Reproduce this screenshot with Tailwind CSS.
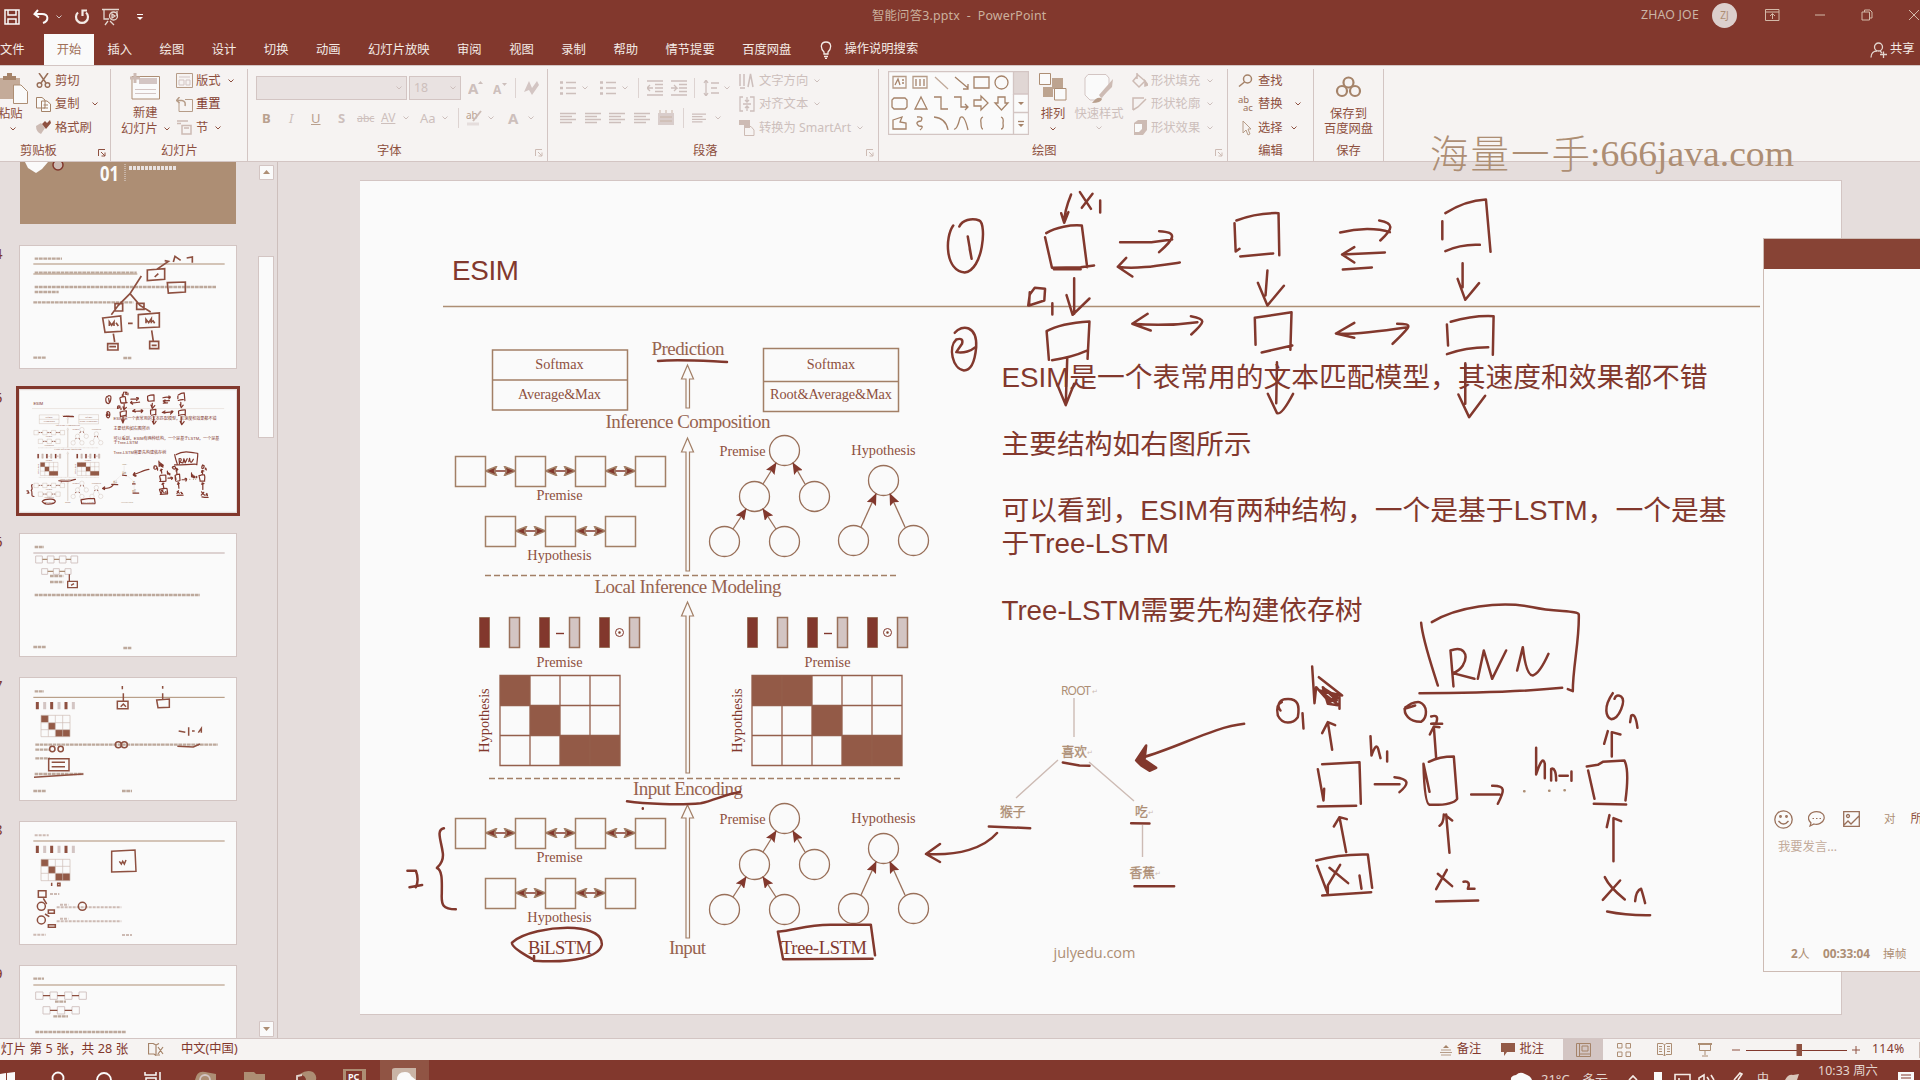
<!DOCTYPE html>
<html lang="zh-CN">
<head>
<meta charset="utf-8">
<title>智能问答3.pptx - PowerPoint</title>
<script src="https://cdn.jsdelivr.net/npm/@tailwindcss/browser@4"></script>
</head>
<body class="w-[1920px] h-[1080px] overflow-hidden bg-[#e5dddc] text-[#82382d] font-['Noto_Sans','Noto_Sans_CJK_SC',sans-serif] text-[12.3px] leading-none">

<svg width="0" height="0" class="absolute">
  <defs>
    <symbol id="chev" viewBox="0 0 6 4"><path d="M.5 .5L3 3L5.5 .5" fill="none" stroke="currentColor"/></symbol>
    <symbol id="launch" viewBox="0 0 8 8"><path d="M.5 7V.5H7M3 3L7 7M7 3.500V7H3.500" fill="none" stroke="currentColor"/></symbol>
    <symbol id="lines" viewBox="0 0 16 12"><path d="M0 1.500H16M0 4.500H12M0 7.500H16M0 10.500H12" stroke="currentColor" stroke-width="1.300"/></symbol>
    <symbol id="list" viewBox="0 0 16 16"><path d="M0 2.500H3M0 8H3M0 13.500H3" stroke="currentColor" stroke-width="2.500"/><path d="M6 2.500H16M6 8H16M6 13.500H16" stroke="currentColor" stroke-width="1.300"/></symbol>
    <symbol id="pair" viewBox="0 0 30 10"><path d="M8 5H22" stroke="#82382d"/><path d="M0 5L11 .5L9 5L11 9.500ZM30 5L19 .5L21 5L19 9.500Z" fill="#82382d"/></symbol>
    <marker id="tip" viewBox="0 0 12 10" refX="11" refY="5" markerWidth="12" markerHeight="10" markerUnits="userSpaceOnUse" orient="auto"><path d="M0 0L12 5L0 10L2 5Z" fill="#82382d"/></marker>

    <g id="lstm" fill="none" stroke="#a27f66" stroke-width="1.500">
      <path d="M456.500 456.500h30v30h-30zM516.500 456.500h30v30h-30zM576.500 456.500h30v30h-30zM636.500 456.500h30v30h-30zM486.500 516.500h30v30h-30zM546.500 516.500h30v30h-30zM606.500 516.500h30v30h-30z"/>
      <use href="#pair" x="486.500" y="466" width="30" height="10"/><use href="#pair" x="546.500" y="466" width="30" height="10"/><use href="#pair" x="606.500" y="466" width="30" height="10"/>
      <use href="#pair" x="516.500" y="526" width="30" height="10"/><use href="#pair" x="576.500" y="526" width="30" height="10"/>
      <g fill="#8e5040" stroke="none" font-size="14.300" text-anchor="middle"><text x="560.500" y="500">Premise</text><text x="560.500" y="560">Hypothesis</text></g>
    </g>
    <g id="tree" fill="none" stroke="#99705a" stroke-width="1.300">
      <circle cx="785.500" cy="450.500" r="15"/><circle cx="755.500" cy="496.500" r="15"/><circle cx="815.500" cy="496.500" r="15"/><circle cx="725.500" cy="541.500" r="15"/><circle cx="785.500" cy="541.500" r="15"/>
      <circle cx="884.500" cy="480.500" r="15"/><circle cx="854.500" cy="540.500" r="15"/><circle cx="914.500" cy="540.500" r="15"/>
      <g marker-end="url(#tip)"><path d="M764 484L777 463"/><path d="M806 484L794 463"/><path d="M734 529L747 509"/><path d="M777 529L764 509"/><path d="M862 527L877 494"/><path d="M906 527L891 494"/></g>
      <g fill="#8e5040" stroke="none" font-size="14.300" text-anchor="middle"><text x="743.500" y="456">Premise</text><text x="884.500" y="454.500">Hypothesis</text></g>
    </g>
    <g id="bars" stroke="#99705a">
      <path fill="#82382d" d="M480.500 617.500h10v30h-10zM540.500 617.500h10v30h-10zM600.500 617.500h10v30h-10z"/>
      <path fill="#d3c5c3" stroke-width="1.500" d="M510.500 617.500h10v30h-10zM570.500 617.500h10v30h-10zM630.500 617.500h10v30h-10z"/>
      <path d="M557 633.500h8" stroke="#82382d" stroke-width="1.400"/><circle cx="620.500" cy="632.500" r="4" fill="none" stroke="#82382d"/><circle cx="620.500" cy="632.500" r="1" fill="#82382d"/>
      <text x="560.500" y="666.500" font-size="14.300" text-anchor="middle" fill="#8e5040" stroke="none">Premise</text>
    </g>

    <!-- Current slide, shared by the editor canvas and its thumbnail -->
    <symbol id="slide" viewBox="361 181 1481 833">
      <rect x="361" y="181" width="1481" height="833" fill="#fafafa"/>
      <path d="M444 306.500H1761" stroke="#ad8e74" stroke-width="1.300"/>
      <g font-family="Liberation Sans, Noto Sans CJK SC, sans-serif" fill="#82382d" font-size="27.800">
        <text x="453" y="280" textLength="67">ESIM</text>
        <text x="1002.500" y="387" textLength="706">ESIM是一个表常用的文本匹配模型，其速度和效果都不错</text>
        <text x="1002.500" y="454" textLength="250">主要结构如右图所示</text>
        <text x="1002.500" y="520" textLength="725">可以看到，ESIM有两种结构，一个是基于LSTM，一个是基</text>
        <text x="1002.500" y="553">于Tree-LSTM</text>
        <text x="1002.500" y="620" textLength="361">Tree-LSTM需要先构建依存树</text>
      </g>
      <g font-family="Liberation Serif, serif">
        <g fill="none" stroke="#a27f66" stroke-width="1.500">
          <path d="M493.500 350h135v60h-135zM493.500 380h135M764.500 348.500h135v63h-135zM764.500 381.500h135"/>
          <path d="M486 575.500H900M490 778.500H904" stroke-dasharray="6 3"/>
          <path fill="#fafafa" stroke-width="1.200" d="M687 408V379L682.500 379L688.500 365L694.500 379L690.500 379V408ZM687 571V452L682.500 452L688.500 438L694.500 452L690.500 452V571ZM687 773V616L682.500 616L688.500 602L694.500 616L690.500 616V773ZM687 938V818L682.500 818L688.500 805L694.500 818L690.500 818V938Z"/>
        </g>
        <g fill="#8e5040" font-size="14.300" text-anchor="middle">
          <text x="560.500" y="368.500">Softmax</text><text x="560.500" y="398.500" textLength="83">Average&amp;Max</text>
          <text x="832" y="368.500">Softmax</text><text x="832" y="398.500" textLength="122">Root&amp;Average&amp;Max</text>
        </g>
        <g fill="#97634f" font-size="19" text-anchor="middle">
          <text x="689" y="355" textLength="73">Prediction</text><text x="689" y="428" textLength="165">Inference Composition</text>
          <text x="689" y="592.500" textLength="187">Local Inference Modeling</text><text x="689" y="794.500" textLength="110">Input Encoding</text><text x="688.500" y="953.500" textLength="37">Input</text>
          <g fill="#82382d" font-size="18.500"><text x="561" y="953.500" textLength="64">BiLSTM</text><text x="825" y="953.500" textLength="86">Tree-LSTM</text></g>
        </g>
        <use href="#lstm"/><use href="#lstm" y="362"/><use href="#tree"/><use href="#tree" y="368"/><use href="#bars"/><use href="#bars" x="268"/>
        <path fill="#935a47" d="M501 675.500h30v30h-30zM531 705.500h30v30h-30zM561 735.500h60v30h-60zM753 675.500h60v30h-60zM813 705.500h30v30h-30zM843 735.500h60v30h-60z"/>
        <path fill="none" stroke="#945f4c" stroke-width="1.300" d="M501 675.500h120v90h-120zM501 705.500h120M501 735.500h120M531 675.500v90M561 675.500v90M591 675.500v90M753 675.500h150v90h-150zM753 705.500h150M753 735.500h150M783 675.500v90M813 675.500v90M843 675.500v90M873 675.500v90"/>
        <g fill="#82382d" font-size="14.300" text-anchor="middle"><text transform="translate(489.500 720.500) rotate(-90)">Hypothesis</text><text transform="translate(742.500 720.500) rotate(-90)">Hypothesis</text></g>
      </g>
      <g font-family="Noto Sans, Noto Sans CJK SC, sans-serif" fill="#ad8e74" font-size="12.800">
        <path d="M1075 698V737M1059 760L1017 798M1090 762L1135 801M1143.500 825V857" stroke="#cdbbb4" stroke-width="1.400"/>
        <text x="1062" y="695" font-size="12" textLength="30">ROOT</text><text x="1062.500" y="755.500" stroke="#ad8e74" stroke-width=".3">喜欢</text><text x="1001" y="816" stroke="#ad8e74" stroke-width=".3">猴子</text><text x="1136" y="816" stroke="#ad8e74" stroke-width=".3">吃</text><text x="1130.500" y="877" stroke="#ad8e74" stroke-width=".3">香蕉</text>
        <g font-size="7" fill="#cdbbb4"><text x="1093" y="694">↵</text><text x="1088" y="755">↵</text><text x="1149" y="815">↵</text><text x="1156" y="876">↵</text></g>
        <text x="1054.500" y="957.500" font-family="Open Sans, sans-serif" font-size="14.500" textLength="82">julyedu.com</text>
      </g>
      <!-- pen annotations -->
      <g class="[stroke-width:var(--ink)] [&_path]:[vector-effect:non-scaling-stroke]" fill="none" stroke="#82382d" stroke-linecap="round" stroke-linejoin="round">
        <g transform="translate(930.500 170.500) scale(.3827 .3333)">
          <path d="M62 165C40 200 40 300 92 306C140 300 150 160 130 150C110 140 85 150 78 168M100 198L110 265L105 235"/>
          <path d="M370 72C360 100 352 130 352 157M344 128L352 157L363 125M393 65L422 115M426 70L398 112M446 90V126"/>
          <path d="M305 188C330 170 370 162 398 165L412 290M302 200L320 292L395 290L430 285M325 296H395"/>
          <path d="M498 215H580L634 207M600 182C650 185 640 205 600 245M654 276C600 285 540 297 492 289M514 262L492 289L530 318"/>
          <path d="M378 323V430M358 374L374 433L418 384M262 365L260 405L300 390L302 355L275 352L262 372L258 405M321 398V432"/>
          <path d="M802 150C840 133 880 127 912 128L914 254M797 158L800 243L810 235M812 258L898 249M883 300L878 375M858 337L883 405L926 346"/>
          <path d="M1073 186C1120 172 1170 172 1203 185M1175 150C1215 158 1212 175 1178 210M1190 246L1078 252M1110 230L1078 252L1110 276M1080 297L1156 291"/>
          <path d="M1348 128Q1400 90 1454 87L1466 244M1340 152V206M1348 242Q1390 220 1438 223M1393 278V350M1380 325L1400 388L1436 338"/>
          <path d="M66 487C85 460 125 465 122 530C118 580 105 600 90 600C60 595 48 530 70 507Q90 500 85 520L70 545C90 550 110 540 120 530"/>
          <path d="M306 482C340 460 390 455 418 453L413 565M306 482L312 568M320 569Q370 562 413 540M360 560L356 704M333 640L356 704L378 640"/>
          <path d="M530 460Q620 468 700 455M570 430L530 460L578 480M683 437C725 445 720 455 684 492M850 442L946 425L943 538M850 442L852 523M868 546L948 525"/>
          <path d="M908 575L906 698M884 670L908 728Q920 735 950 670M1062 489Q1100 495 1250 470M1110 457L1062 489L1110 502M1222 460C1265 460 1260 465 1210 520"/>
          <path d="M1362 454Q1420 434 1474 437L1472 553M1352 462L1355 525M1352 551Q1400 530 1460 530M1400 578V700M1382 672L1410 740L1452 676"/>
        </g>
        <path d="M659 361C680 359 705 361 728 362M927 854C960 856 985 848 998 833M941 844L927 854L941 862"/>
        <g transform="translate(400 600) scale(.3508 .3333)">
          <path d="M650 604C700 612 800 616 860 610C900 600 940 580 972 576M695 625V626M128 685C105 690 120 720 125 760C128 790 110 800 108 804C125 810 122 850 122 880C120 915 125 928 162 928M24 812L48 812Q58 840 48 862M30 862L66 855"/>
          <path d="M385 1080C350 1060 320 1040 322 1028C350 1000 430 980 500 984C560 990 580 1010 578 1035C570 1070 500 1090 385 1082V1068M1080 995C1130 990 1160 975 1230 974L1345 974L1357 1066M1080 995L1095 1078L1350 1076"/>
        </g>
        <g transform="translate(980.500 580.500) scale(.3333)">
          <path d="M250 546L300 555L330 556M28 738L152 743M455 728L510 729M465 917H584M794 430C700 440 600 500 485 532"/>
          <path fill="#82382d" d="M500 495L470 540L485 555L510 571L530 562L495 538Z"/>
        </g>
        <g transform="translate(1250.500 590.500) scale(.3333)">
          <path d="M547 95C620 50 750 30 850 50C920 65 985 60 988 72C990 150 970 230 970 302L955 296M515 97C520 150 545 220 565 285M510 308C650 308 800 305 938 292"/>
          <path d="M603 180L612 288M603 180C640 165 660 190 640 225C630 240 620 245 610 248L675 265M685 265L703 180L728 265L770 180M803 240L820 170Q830 255 850 255Q870 250 897 190"/>
          <path d="M188 228L195 338L200 290L240 335L270 320M208 260L278 315L210 300L270 345L235 340L220 290L262 330M225 295L268 322L238 328M270 320V355"/>
          <path d="M93 360C80 345 90 330 105 326C150 320 150 350 145 380C130 400 100 405 85 375C80 350 88 338 97 335M159 368L162 414M248 478L235 395M218 428L235 395L257 404"/>
          <path d="M218 521L330 515L334 640M205 536L222 630L224 595M205 648L320 646M290 785L270 680M253 708L270 680L292 686"/>
          <path d="M200 810Q270 790 355 792L368 892M203 826L235 910M218 915L365 905M240 832L296 878M272 823L235 885V905M330 855L336 895"/>
          <path d="M363 437L366 495Q380 455 386 475L393 503M413 483V513M376 581H450M435 560C480 565 480 580 450 605"/>
          <path d="M468 350C460 370 480 395 515 394C535 380 535 345 510 335C490 333 475 345 465 355L497 345M545 378Q570 370 560 398L545 400H578M560 502L553 408M541 432L553 408L570 410"/>
          <path d="M538 514Q570 498 613 498L623 625Q610 645 540 643Q525 640 522 520L540 604M600 787L590 672M570 706Q582 700 583 672M590 676L608 690"/>
          <path d="M565 850L608 887M592 838L560 896M642 874Q665 870 655 895H675M560 933L686 930M665 612H750M728 586C770 585 765 600 745 640"/>
          <path d="M860 472V552Q880 490 886 520V563M905 570V535Q920 530 920 570M930 556H955M966 543V571"/>
          <g stroke="#ad8e74"><path d="M824 602h1M899 601h1M945 599h1"/></g>
          <path d="M1090 308C1060 350 1070 380 1085 386C1110 385 1130 330 1115 318Q1100 310 1095 325M1142 395L1145 376Q1158 365 1164 412M1087 498V425M1064 460L1075 422M1087 425L1113 432"/>
          <path d="M1012 528L1045 523L1060 514L1125 510Q1140 540 1128 630M1016 540L1035 625M1033 640L1130 642M1092 812V683M1072 710L1080 674M1092 683L1115 692"/>
          <path d="M1066 860Q1080 890 1126 927M1112 870L1060 928M1157 932Q1160 900 1175 895Q1180 910 1187 938M1073 963Q1130 975 1202 974"/>
        </g>
      </g>
    </symbol>
  </defs>
</svg>

<div class="flex h-[1080px] flex-col">
  <!-- title bar -->
  <header class="flex h-[34px] shrink-0 items-center bg-[#82382d] pl-1 text-[#d3c5c3]">
    <div class="flex w-[869px] items-center">
      <svg class="h-4 w-4" viewBox="0 0 16 16" fill="none" stroke="#fafafa" stroke-width="1.500"><path d="M1 1H15V15H1ZM4 1V6H12V1M4 15V10H12V15"/></svg>
      <svg class="ml-[13px] h-4 w-4" viewBox="0 0 16 16" fill="none" stroke="#fafafa" stroke-width="2"><path d="M5 1L1.500 5L6 8.500M2 5H9C16 5 16 12 10 14"/></svg>
      <svg class="ml-[7px] h-1 w-[6px]"><use href="#chev" width="6" height="4"/></svg>
      <svg class="ml-3 h-4 w-4" viewBox="0 0 16 16" fill="none" stroke="#f4ebe6" stroke-width="2.200"><path d="M4 3.500A6 6 0 1 0 12 3.500M8.500 7V1.500H13"/></svg>
      <svg class="ml-[12px] h-[18px] w-[18px]" viewBox="0 0 18 18" fill="none" stroke="#e3d6cf" stroke-width="1.300"><path d="M0 1.500H17M2 2V11H7M6 13L3 17M8 13L12 17M15 3V8"/><circle cx="11.500" cy="8" r="4"/><path d="M10 6L13 8L10 10Z"/></svg>
      <svg class="ml-[16px] h-2 w-2" viewBox="0 0 8 8"><path d="M1 1.500H7" stroke="#fafafa"/><path d="M1 4H7L4 7Z" fill="#fafafa"/></svg>
    </div>
    <div class="w-[769px] whitespace-pre pb-px text-[12.400px] tracking-[.18px] text-[#cbb09d]">智能问答3.pptx  -  PowerPoint</div>
    <div class="flex items-center pb-1">
      <span class="w-[72px] whitespace-nowrap pl-px text-[12.300px] tracking-[.2px] text-[#cbb5a6]">ZHAO JOE</span>
      <span class="flex h-[25px] w-[25px] items-center justify-center rounded-full bg-[#dccfcc] text-[10px] text-[#ad8e74]">ZJ</span>
      <svg class="ml-7 h-3 w-[15px]" viewBox="0 0 15 12" fill="none" stroke="#d3b9a8"><path d="M.5 .5H14V11.500H.5ZM.5 3H14M7.500 10V5M5 7L7.500 4.500L10 7"/></svg>
      <svg class="ml-[34px] h-3 w-3" viewBox="0 0 12 12"><path d="M1 6H11" stroke="#d3b9a8"/></svg>
      <svg class="ml-[35px] h-3 w-3" viewBox="0 0 12 12" fill="none" stroke="#d3b9a8"><path d="M1 3H8.500V11H1ZM3.500 3V1H9L11 3V9H8.500"/></svg>
      <svg class="ml-[35px] h-3 w-3 shrink-0" viewBox="0 0 12 12" fill="none" stroke="#d3b9a8"><path d="M1 1L11 11M11 1L1 11"/></svg>
    </div>
  </header>
  <!-- ribbon tabs -->
  <nav class="flex h-[31px] shrink-0 items-stretch bg-[#82382d] text-[#f4ebe6]">
    <span class="flex w-[44px] items-center pt-px">文件</span>
    <span class="flex w-[50px] items-center justify-center bg-[#fafafa] pt-px text-[#9f7058]">开始</span>
    <div class="flex items-center gap-[27.500px] pl-[13.500px] pt-px">
      <span>插入</span><span>绘图</span><span>设计</span><span>切换</span><span>动画</span><span>幻灯片放映</span><span>审阅</span><span>视图</span><span>录制</span><span>帮助</span><span>情节提要</span><span>百度网盘</span>
    </div>
    <div class="flex items-center pl-[29px]">
      <svg class="h-[18px] w-3" viewBox="0 0 12 18" fill="none" stroke="#f4ebe6" stroke-width="1.300"><path d="M4 13V11C0 7 .5 1 6 1S12 7 8 11V13ZM4 15.500H8M5 17.500H7"/></svg>
      <span class="ml-3">操作说明搜索</span>
    </div>
    <div class="ml-auto flex w-[50px] items-center">
      <svg class="h-4 w-[18px]" viewBox="0 0 18 16" fill="none" stroke="#e3d6cf" stroke-width="1.300"><circle cx="8.500" cy="5" r="4"/><path d="M1 15.500C1 11 4 9 7 9M10 9L12 11M10 12.500H17M13.500 9.500V16"/></svg>
      <span class="ml-[2px] whitespace-nowrap">共享</span>
    </div>
  </nav>

  <!-- ribbon -->
  <section class="flex h-24 shrink-0 border-t border-[#d3c5c3] bg-[#f6f3f2] pt-[3px] text-[#8e5040]">
    <div class="flex w-[111px] flex-col border-r border-[#d3c5c3]">
      <div class="flex h-[72px]">
        <div class="flex w-9 flex-col pt-1">
          <svg class="h-[31px] w-7" viewBox="0 0 28 31"><path d="M0 5H20V26H0Z" fill="#c4ab99"/><path d="M3 7V3H7V0H12V3H16V7Z" fill="#a58369"/><path d="M13.500 12H21L27.500 18.500V30.500H13.500Z" fill="#fafafa" stroke="#ad8e74"/></svg>
          <span class="-ml-[2px] mt-[4px]">粘贴</span><svg class="ml-[10px] mt-[7px] h-1 w-[6px]"><use href="#chev" width="6" height="4"/></svg>
        </div>
        <div class="flex flex-col">
          <div class="flex h-[23.500px] items-center gap-1"><svg class="h-[15px] w-[15px]" viewBox="0 0 15 15" fill="none" stroke="#99705a" stroke-width="1.500"><path d="M3 0L10 10M12 0L5 10"/><circle cx="3.500" cy="12" r="2.300"/><circle cx="11.500" cy="12" r="2.300"/></svg>剪切</div>
          <div class="flex h-[23.500px] items-center gap-1"><svg class="h-[15px] w-[15px]" viewBox="0 0 15 15" fill="#fafafa" stroke="#a58369"><path d="M.5 .5H6L9 3V11H.5ZM5.500 4H11L14.500 7V14.500H5.500ZM7.500 8H12M7.500 11H12"/></svg>复制<svg class="ml-2 h-1 w-[6px]"><use href="#chev" width="6" height="4"/></svg></div>
          <div class="flex h-[23.500px] items-center gap-1"><svg class="h-[15px] w-[15px]" viewBox="0 0 15 15"><path d="M0 6L5 3L9 8L5 14Q0 12 0 6Z" fill="#cdbbb4"/><path d="M6 4L9 1L11 3L14 0L15 3L10 9Z" fill="#8e5040"/></svg>格式刷</div>
        </div>
      </div>
      <div class="flex h-5 items-center pl-5">剪贴板<svg class="ml-auto mr-1 mt-1 h-2 w-2"><use href="#launch" width="8" height="8"/></svg></div>
    </div>
    <div class="flex w-[137px] flex-col border-r border-[#d3c5c3]">
      <div class="flex h-[72px]">
        <div class="flex w-[65px] flex-col pl-[11px] pt-1">
          <svg class="ml-2 h-[27px] w-[31px]" viewBox="0 0 31 27"><path d="M2 3.500H29.500V26H2Z" fill="#fafafa" stroke="#ad8e74"/><path d="M9 5H27V11H9Z" fill="#d3c5c3"/><path d="M5 16.500H26M5 20.500H26" stroke="#d3c5c3"/><path d="M5 0V10M0 5H10" stroke="#cdbbb4" stroke-width="3"/></svg>
          <span class="ml-[11px] mt-[7px]">新建</span><span class="-ml-px mt-[4px] flex items-center gap-[6px] whitespace-nowrap">幻灯片<svg class="h-1 w-[6px]"><use href="#chev" width="6" height="4"/></svg></span>
        </div>
        <div class="flex flex-col">
          <div class="flex h-[23.500px] items-center gap-[3px]"><svg class="h-[15px] w-[17px]" viewBox="0 0 17 15" fill="none" stroke="#b69c88"><path d="M.5 .5H16.500V14.500H.5Z"/><path d="M3 4H14M3 7H8V12H3ZM10 7H14V12H10Z" stroke="#d3c5c3"/></svg>版式<svg class="ml-1 h-1 w-[6px]"><use href="#chev" width="6" height="4"/></svg></div>
          <div class="flex h-[23.500px] items-center gap-[3px]"><svg class="h-[15px] w-[17px]" viewBox="0 0 17 15" fill="none" stroke="#b69c88"><path d="M3 5V14.500H16.500V2.500H9"/><path d="M1 3.500H6Q10 4 9 9M3.500 0L.5 3.500L3.500 6" stroke-width="1.500"/></svg><span class="text-[#82382d]">重置</span></div>
          <div class="flex h-[23.500px] items-center gap-[3px]"><svg class="h-[15px] w-[17px]" viewBox="0 0 17 15" fill="none" stroke="#cdbbb4" stroke-width="1.500"><path d="M1 1H12M1 3.500H5M6 5.500H15V14H6ZM8 8H13"/></svg>节<svg class="ml-1 h-1 w-[6px]"><use href="#chev" width="6" height="4"/></svg></div>
        </div>
      </div>
      <div class="flex h-5 items-center pl-[50px]">幻灯片</div>
    </div>
    <div class="flex w-[300px] flex-col border-r border-[#d3c5c3] text-[#cdbfbc]">
      <div class="flex h-[72px] flex-col pl-2">
        <div class="mt-[7px] flex h-6 items-center">
          <div class="flex h-6 w-[151px] items-center justify-end border border-[#d3c5c3] bg-[#e9e2e1] pr-1"><svg class="h-1 w-[6px]"><use href="#chev" width="6" height="4"/></svg></div>
          <div class="ml-[2px] flex h-6 w-[52px] items-center justify-between border border-[#d3c5c3] bg-[#e9e2e1] px-1">18<svg class="h-1 w-[6px]"><use href="#chev" width="6" height="4"/></svg></div>
          <svg class="ml-[7px] h-4 w-[15px]" viewBox="0 0 15 16"><text x="0" y="14" font-size="15" font-weight="700" fill="#cdbfbc">A</text><path d="M10 4H15L12.500 1Z" fill="#cdbfbc"/></svg>
          <svg class="ml-[10px] h-4 w-[14px]" viewBox="0 0 14 16"><text x="0" y="14" font-size="12" font-weight="700" fill="#cdbfbc">A</text><path d="M9 3H14L11.500 6Z" fill="#cdbfbc"/></svg>
          <span class="ml-[8px] h-5 w-px bg-[#ddd3d1]"></span>
          <svg class="ml-2 h-4 w-4" viewBox="0 0 16 16"><path d="M0 12L5 1L8 8L13 1L15 5L8 15L5 10Z" fill="#d3c5c3"/></svg>
        </div>
        <div class="mt-[6px] flex h-6 items-center text-[13px]">
          <b class="w-[25px] pl-[6px] text-[#b9a08e]">B</b><i class="w-6 pl-2">I</i><u class="w-[26px] pl-[6px] text-[#b9a08e]">U</u><b class="w-[26px] pl-[7px]">S</b><s class="w-6 text-[10.500px]">abc</s>
          <u class="w-[18px] text-[12px]">AV</u><svg class="ml-[4px] h-1 w-[6px]"><use href="#chev" width="6" height="4"/></svg><span class="ml-[11px] w-[18px]">Aa</span><svg class="ml-[4px] h-1 w-[6px]"><use href="#chev" width="6" height="4"/></svg>
          <span class="ml-[10px] h-5 w-px bg-[#ddd3d1]"></span>
          <svg class="ml-[7px] h-4 w-[17px]" viewBox="0 0 17 16"><text x="0" y="9" font-size="10" fill="#b9a08e">ab</text><path d="M7 11L15 1" stroke="#cdbbb4" stroke-width="2"/><path d="M1 14H13" stroke="#e5dddc" stroke-width="3"/></svg>
          <svg class="ml-[5px] h-1 w-[6px]"><use href="#chev" width="6" height="4"/></svg><b class="ml-[14px] w-[15px] text-[15px]">A</b><svg class="ml-[5px] h-1 w-[6px]"><use href="#chev" width="6" height="4"/></svg>
        </div>
      </div>
      <div class="flex h-5 items-center pl-[129px] text-[#8e5040]">字体<svg class="ml-auto mr-1 mt-1 h-2 w-2 text-[#cdbbb4]"><use href="#launch" width="8" height="8"/></svg></div>
    </div>
    <div class="flex w-[331px] flex-col border-r border-[#d3c5c3] text-[#cdbfbc]">
      <div class="flex h-[72px] pl-3">
        <div class="flex w-[179px] flex-col">
          <div class="mt-[7px] flex h-6 items-center">
            <svg class="h-4 w-4"><use href="#list" width="16" height="16"/></svg><svg class="ml-[6px] h-1 w-[6px]"><use href="#chev" width="6" height="4"/></svg>
            <svg class="ml-3 h-4 w-4"><use href="#list" width="16" height="16"/></svg><svg class="ml-[6px] h-1 w-[6px]"><use href="#chev" width="6" height="4"/></svg>
            <span class="ml-[10px] h-5 w-px bg-[#ddd3d1]"></span>
            <svg class="ml-2 h-4 w-4" viewBox="0 0 16 16" stroke="currentColor" stroke-width="1.300"><path d="M0 1H16M8 4.500H16M8 8H16M8 11.500H16M0 15H16M6 8H0L3 5M0 8L3 11" fill="none"/></svg>
            <svg class="ml-2 h-4 w-4" viewBox="0 0 16 16" stroke="currentColor" stroke-width="1.300"><path d="M0 1H16M8 4.500H16M8 8H16M8 11.500H16M0 15H16M0 8H6L3 5M6 8L3 11" fill="none"/></svg>
            <span class="ml-[7px] h-5 w-px bg-[#ddd3d1]"></span>
            <svg class="ml-2 h-4 w-4" viewBox="0 0 16 16" stroke="currentColor" stroke-width="1.300"><path d="M3 0V16M1 3L3 0L5 3M1 13L3 16L5 13M8 3H16M8 8H14M8 13H16" fill="none"/></svg><svg class="ml-[5px] h-1 w-[6px]"><use href="#chev" width="6" height="4"/></svg>
          </div>
          <div class="mt-[6px] flex h-6 items-center gap-[8.500px]">
            <svg class="h-3 w-4"><use href="#lines" width="16" height="12"/></svg><svg class="h-3 w-4"><use href="#lines" width="16" height="12"/></svg><svg class="h-3 w-4"><use href="#lines" width="16" height="12"/></svg><svg class="h-3 w-4"><use href="#lines" width="16" height="12"/></svg>
            <svg class="h-4 w-4" viewBox="0 0 16 16"><path d="M0 3H16V15H0Z" fill="#d9cdcb"/><path d="M2 0V3M8 0V3M14 0V3M2 7H14M2 11H14" stroke="#c9b4a6"/></svg>
            <span class="h-5 w-px bg-[#ddd3d1]"></span><svg class="h-3 w-[14px]"><use href="#lines" width="14" height="12"/></svg><svg class="h-1 w-[6px]"><use href="#chev" width="6" height="4"/></svg>
          </div>
        </div>
        <div class="flex flex-col whitespace-nowrap">
          <div class="flex h-[23.500px] items-center gap-1"><svg class="h-4 w-4" viewBox="0 0 16 16" stroke="currentColor" stroke-width="1.500" fill="none"><path d="M1 1V13M5 1V13M9 14L11.500 1L14 14M1 15H6"/></svg>文字方向<svg class="ml-0.5 h-1 w-[6px]"><use href="#chev" width="6" height="4"/></svg></div>
          <div class="flex h-[23.500px] items-center gap-1"><svg class="h-4 w-4" viewBox="0 0 16 16" stroke="currentColor" stroke-width="1.300" fill="none"><path d="M4 1H1V15H4M11 1H15V15H11M4 8H12M8 1V6M6 4L8 6L10 4M8 15V10M6 12L8 10L10 12"/></svg>对齐文本<svg class="ml-0.5 h-1 w-[6px]"><use href="#chev" width="6" height="4"/></svg></div>
          <div class="flex h-[23.500px] items-center gap-1"><svg class="h-4 w-4" viewBox="0 0 16 16"><path d="M0 0H11V8H5V5H0Z" fill="#cdbbb4"/><path d="M5.500 6.500H12L15 10V15.500H5.500Z" fill="none" stroke="#cdbbb4"/></svg><span>转换为 SmartArt</span><svg class="ml-0.5 h-1 w-[6px]"><use href="#chev" width="6" height="4"/></svg></div>
        </div>
      </div>
      <div class="flex h-5 items-center pl-[145px] text-[#8e5040]">段落<svg class="ml-auto mr-1 mt-1 h-2 w-2 text-[#cdbbb4]"><use href="#launch" width="8" height="8"/></svg></div>
    </div>
    <div class="flex w-[349px] flex-col border-r border-[#d3c5c3]">
      <div class="flex h-[72px] pl-[9px]">
        <svg class="mt-[2px] h-[64px] w-[141px]" viewBox="888 71 141 64" fill="none" stroke="#a58369" stroke-width="1.300">
          <path d="M888.500 71.500H1028.500V134.500H888.500Z" fill="#fafafa" stroke="#d3c5c3"/><path d="M1013.500 71.500H1028.500V94H1013.500Z" fill="#e0d6d4" stroke="#d3c5c3"/><path d="M1013.500 94V134M1013.500 112.500H1028" stroke="#d3c5c3"/>
          <path d="M893 76.500H906V88H893ZM913 76.500H927V88H913Z" stroke="#b69c88"/><path d="M895 85L898 79L900 85M902 80H904M902 83H904M916 79V86M920 79V86M924 79V86"/>
          <path d="M935 77L948 89" stroke="#c0a999"/><path d="M955 77L968 88M968 84V89H963M974 77H989V88H974Z"/><circle cx="1001.500" cy="82.500" r="6.500"/>
          <path d="M894 98H905L907 100V107L905 109H894L892 107V100ZM921 97L927 109H915ZM934 97H941V109H948M954 97H961V107H968M965 104L968 107L965 110M974 100H981V96L988 103L981 110V106H974ZM998 97H1005V103H1008L1001.500 110L995 103H998Z"/>
          <path d="M893 120L902 117L900 122L906 123V129H893ZM917 117Q924 116 921 121Q914 122 919 126Q925 126 920 130M934 117Q946 118 948 130M954 129Q957 130 960 118Q964 113 968 130M983 117Q980 118 981 123Q981 129 983 129M1001 117Q1004 118 1003 123Q1004 129 1001 129"/>
          <path d="M1018 102H1024L1021 105ZM1018 124H1024L1021 127Z" fill="#a58369" stroke="none"/><path d="M1018 121.500H1024"/>
        </svg>
        <div class="flex w-[44px] flex-col items-center pl-1 pt-1">
          <svg class="h-[28px] w-[28px]" viewBox="0 0 28 28"><path d="M13 5H24V16H13ZM4 14H14V24H4Z" fill="#bda490"/><path d="M.5 .5H11.500V11.500H.5ZM15.500 15.500H27V27H15.500Z" fill="#fafafa" stroke="#ad8e74"/></svg>
          <span class="mt-[7px]">排列</span><svg class="mt-[7px] h-1 w-[6px]"><use href="#chev" width="6" height="4"/></svg>
        </div>
        <div class="flex w-[52px] flex-col items-center pt-1 text-[#cdbfbc]">
          <svg class="h-[30px] w-[30px]" viewBox="0 0 30 30"><path d="M4 1.500H22L25 5V15L16 27H6L1 22V5Z" fill="#fafafa" stroke="#d3c5c3"/><path d="M29 6L28 14L17 25L15 22Z" fill="#cdbbb4"/><path d="M8 30Q14 22 18 26Q17 30 8 30Z" fill="#b9a08e"/></svg>
          <span class="mt-[5px] whitespace-nowrap">快速样式</span><svg class="mt-[6px] h-1 w-[6px]"><use href="#chev" width="6" height="4"/></svg>
        </div>
        <div class="flex flex-col whitespace-nowrap pl-[7px] text-[#cdbfbc]">
          <div class="flex h-[23.500px] items-center gap-[3px]"><svg class="h-4 w-4" viewBox="0 0 16 16" fill="none" stroke="#cdbbb4" stroke-width="1.500"><path d="M6 2L13 8L7 14L1 8ZM5 0V6"/><path d="M13 8L16 12L13 13Z" fill="#cdbbb4"/></svg>形状填充<svg class="ml-1 h-1 w-[6px]"><use href="#chev" width="6" height="4"/></svg></div>
          <div class="flex h-[23.500px] items-center gap-[3px]"><svg class="h-4 w-4" viewBox="0 0 16 16" fill="none" stroke="#cdbbb4" stroke-width="1.500"><path d="M1 14V2H12M14 3L6 11L1 14"/></svg>形状轮廓<svg class="ml-1 h-1 w-[6px]"><use href="#chev" width="6" height="4"/></svg></div>
          <div class="flex h-[23.500px] items-center gap-[3px]"><svg class="h-4 w-4" viewBox="0 0 16 16"><path d="M2 3L6 0H15V10L11 15H2Z" fill="#cdbbb4"/><path d="M3 4H10V9L7 12H3Z" fill="#fafafa"/></svg>形状效果<svg class="ml-1 h-1 w-[6px]"><use href="#chev" width="6" height="4"/></svg></div>
        </div>
      </div>
      <div class="flex h-5 items-center pl-[153px]">绘图<svg class="ml-auto mr-1 mt-1 h-2 w-2 text-[#cdbbb4]"><use href="#launch" width="8" height="8"/></svg></div>
    </div>
    <div class="flex w-[86px] flex-col border-r border-[#d3c5c3]">
      <div class="flex h-[72px] flex-col pl-[10px]">
        <div class="flex h-[23.500px] items-center gap-1"><svg class="h-[14px] w-4" viewBox="0 0 16 14" fill="none" stroke="#a58369" stroke-width="1.500"><circle cx="9.500" cy="5" r="4"/><path d="M6.500 8L1 12.500"/></svg>查找</div>
        <div class="flex h-[23.500px] items-center gap-1"><div class="flex h-4 w-4 flex-col text-[9.500px] leading-[8px] text-[#99705a]"><span>ab</span><span class="pl-[5px]">ac</span></div>替换<svg class="ml-2 h-1 w-[6px]"><use href="#chev" width="6" height="4"/></svg></div>
        <div class="flex h-[23.500px] items-center gap-1"><svg class="h-4 w-4" viewBox="0 0 16 16" fill="none" stroke="#b69c88"><path d="M5 1V13L8 10L10 15L12 14L10 9H13Z"/></svg>选择<svg class="ml-1 h-1 w-[6px]"><use href="#chev" width="6" height="4"/></svg></div>
      </div>
      <div class="flex h-5 items-center justify-center">编辑</div>
    </div>
    <div class="flex w-[70px] flex-col border-r border-[#d3c5c3]">
      <div class="flex h-[72px] flex-col items-center pt-[7px]">
        <svg class="h-[22px] w-[27px]" viewBox="0 0 27 22" fill="none" stroke="#a58369" stroke-width="2.200"><circle cx="13.500" cy="6.500" r="5"/><circle cx="7" cy="15" r="5"/><circle cx="20" cy="15" r="5"/></svg>
        <span class="mt-[10px]">保存到</span><span class="mt-[3px]">百度网盘</span>
      </div>
      <div class="flex h-5 items-center justify-center">保存</div>
    </div>
  </section>

  <!-- workspace -->
  <main class="flex h-[877px] shrink-0 border-t border-[#d3c5c3]">
    <aside class="flex w-[278px] border-r border-[#cdbfbc]">
      <div class="flex w-[258px] flex-col gap-[22px] overflow-hidden text-[15px]">
        <div class="ml-5 h-[62px] w-[216px] shrink-0">
          <svg class="h-[62px] w-[216px]" viewBox="0 0 216 62"><path d="M0 0H216V62H0Z" fill="#ad8e74"/><path d="M5 0H28L22 7L16 11L8 6Z" fill="#fafafa"/><circle cx="38" cy="3" r="5" fill="#cdbbb4" stroke="#82382d" stroke-width="1.500"/><path d="M105 2V20" stroke="#e5dddc" stroke-dasharray="1 1"/><text x="80" y="19" font-size="21" font-weight="700" fill="#fafafa" textLength="19" lengthAdjust="spacingAndGlyphs">01</text><path d="M109 6H156" stroke="#e9e2e1" stroke-width="4" stroke-dasharray="3 1"/></svg>
        </div>
        <div class="flex h-[122px] shrink-0"><span class="-ml-[6px] w-[26px]">4</span>
          <svg class="h-[122px] w-[216px] bg-[#fafafa] outline outline-[#d3c5c3]" viewBox="60 262 648 366" fill="none" stroke="#8e5040" stroke-width="5"><path d="M100 316H674M100 346H412" stroke="#ad8e74" stroke-width="3"/><path d="M104 300H186M104 342H410M104 385H648M104 400H176M100 431H400M100 597H138M370 598H396" stroke="#bda99c" stroke-width="7" stroke-dasharray="11 2"/><path d="M442 334L494 330V362L442 366ZM502 372L556 370V400L505 403ZM308 478L362 472L365 518L315 521ZM415 468L478 463V505L415 508ZM323 555H354V574H323ZM449 548H476V570H449ZM345 435H368V457H345ZM410 434H432V452H410ZM470 332L505 308L494 306M424 352L390 405L355 440L334 468M390 405L420 440L452 460M340 525L344 550M455 515L460 548M464 355L475 345M328 502V490L335 500L342 490V502M348 492L355 502M438 494V482L446 492L454 480V494M458 485L464 494M384 494H398M328 564H348M455 560H470M520 310L525 293L542 305M560 298L577 295V312"/></svg>
        </div>
        <div class="flex h-[122px] shrink-0"><span class="-ml-[6px] w-[26px]">5</span>
          <svg class="h-[122px] w-[216px] outline-[3px] outline-offset-1 outline-[#82382d] [--ink:1.2px]" viewBox="0 0 216 122" preserveAspectRatio="none"><use href="#slide" width="216" height="122"/></svg>
        </div>
        <div class="flex h-[122px] shrink-0"><span class="-ml-[6px] w-[26px]">6</span>
          <svg class="h-[122px] w-[216px] bg-[#fafafa] outline outline-[#d3c5c3]" viewBox="60 1122 648 366" fill="none" stroke="#8e5040" stroke-width="4"><path d="M100 1179H674" stroke="#d3c5c3" stroke-width="5"/><path d="M104 1161H132M104 1305H600M150 1248H190M150 1266H190M100 1461H138M370 1464H396" stroke="#bda99c" stroke-width="7" stroke-dasharray="11 2"/><path d="M107 1188H127V1209H107ZM142 1188H162V1209H142ZM178 1188H198V1209H178ZM213 1188H233V1209H213ZM125 1226H143V1243H125ZM160 1226H178V1243H160ZM195 1226H213V1243H195Z" stroke="#d3c5c3" stroke-width="3"/><path d="M127 1198H142M162 1198H178M198 1198H213M143 1234H160M178 1234H195" stroke="#ad8e74"/><path d="M203 1264H232V1283H203ZM208 1243V1264M213 1276L222 1271"/></svg>
        </div>
        <div class="flex h-[122px] shrink-0"><span class="-ml-[6px] w-[26px]">7</span>
          <svg class="h-[122px] w-[216px] bg-[#fafafa] outline outline-[#d3c5c3]" viewBox="60 292 648 366" fill="none" stroke="#8e5040" stroke-width="4.500"><path d="M100 350H674" stroke="#ad8e74" stroke-width="3"/><path d="M104 332H132M106 492H654M106 507H150M106 533H150M104 580H250M100 631H138M366 631H396" stroke="#bda99c" stroke-width="7" stroke-dasharray="11 2"/><path d="M112 364V386M155 364V386M198 364V386" stroke-width="9"/><path d="M134 364V386M177 364V386M220 364V386" stroke="#d3c5c3" stroke-width="9"/><path d="M123 404H145V425H123ZM145 426H166V447H145ZM166 447H210V468H166Z" fill="#935a47" stroke="none"/><path d="M123 404H210V468H123ZM123 426H210M123 447H210M145 404V468M166 404V468M188 404V468" stroke="#cdbbb4" stroke-width="2"/><path d="M352 362H384V384H352ZM470 358L508 355V380L474 381ZM367 316V326M370 338V360M488 316V324M488 338V355M146 534H207V570H146ZM155 545H195M155 558H195M102 590L250 580M536 451L556 455M566 440V465M576 451H584M595 456L604 443V456M532 497L580 499L600 490M362 378L370 370L378 378"/><circle cx="355" cy="492" r="9"/><circle cx="373" cy="492" r="9"/><circle cx="157" cy="505" r="8"/><circle cx="182" cy="505" r="8"/></svg>
        </div>
        <div class="flex h-[122px] shrink-0"><span class="-ml-[6px] w-[26px]">8</span>
          <svg class="h-[122px] w-[216px] bg-[#fafafa] outline outline-[#d3c5c3]" viewBox="60 724 648 366" fill="none" stroke="#8e5040" stroke-width="4.500"><path d="M100 781H674" stroke="#ad8e74" stroke-width="3"/><path d="M104 764H146M180 972H205M180 1014H205M170 980H364M170 1022H364M100 1062H138M366 1063H396M150 940H178" stroke="#cdbbb4" stroke-width="6" stroke-dasharray="9 3"/><path d="M112 795V817M155 795V817M198 795V817" stroke-width="9"/><path d="M134 795V817M177 795V817M220 795V817" stroke="#d3c5c3" stroke-width="9"/><path d="M123 836H145V857H123ZM145 857H166V878H145ZM166 878H210V900H166Z" fill="#935a47" stroke="none"/><path d="M123 836H210V900H123ZM123 857H210M123 878H210M145 836V900M166 836V900M188 836V900" stroke="#cdbbb4" stroke-width="2"/><path d="M335 812L405 808L408 872L335 874ZM358 842L364 850L368 842L373 850L378 838M155 906V916M173 908H180V915H173ZM115 930H138V950H115ZM130 953L140 970M145 988H163V998H145ZM135 1000L148 1008M145 1032H166V1040H145Z"/><circle cx="124" cy="977" r="12"/><circle cx="124" cy="1018" r="12"/><circle cx="247" cy="977" r="12"/></svg>
        </div>
        <div class="flex h-[122px] shrink-0"><span class="-ml-[6px] w-[26px]">9</span>
          <svg class="h-[122px] w-[216px] bg-[#fafafa] outline outline-[#d3c5c3]" viewBox="60 1156 648 366" fill="none" stroke="#8e5040" stroke-width="4"><path d="M100 1213H674" stroke="#ad8e74" stroke-width="3"/><path d="M100 1194H132M106 1354H378M165 1263H198M160 1307H204" stroke="#bda99c" stroke-width="7" stroke-dasharray="11 2"/><path d="M107 1234H129V1256H107ZM150 1234H172V1256H150ZM194 1234H216V1256H194ZM237 1234H259V1256H237ZM129 1278H150V1300H129ZM172 1278H194V1300H172ZM216 1278H238V1300H216Z" stroke="#d3c5c3" stroke-width="3"/><path d="M129 1245H150M172 1245H194M216 1245H237M150 1289H172M194 1289H216"/></svg>
        </div>
      </div>
      <div class="flex w-4 flex-col items-center pt-[3px]">
        <svg class="h-[15px] w-[15px]" viewBox="0 0 15 15"><path d="M.5 .5H14.500V14.500H.5Z" fill="#fafafa" stroke="#d3c5c3"/><path d="M4 9H11L7.500 5Z" fill="#ad8e74"/></svg>
        <div class="mt-[76px] h-[182px] w-4 border border-[#d3c5c3] bg-[#fafafa]"></div>
        <svg class="mb-[1px] mt-auto h-[16px] w-[15px]" viewBox="0 0 15 16"><path d="M.5 .5H14.500V15.500H.5Z" fill="#fafafa" stroke="#d3c5c3"/><path d="M4 6H11L7.500 10Z" fill="#ad8e74"/></svg>
      </div>
    </aside>
    <div class="flex-1 pl-[82px] pt-[18px]">
      <svg class="h-[835px] w-[1482px] border-b border-r border-t border-[#d3c5c3] [--ink:2.5px]" viewBox="0 0 1481 833"><use href="#slide" width="1481" height="833"/></svg>
    </div>
  </main>

  <!-- status bar -->
  <footer class="flex h-[22px] shrink-0 items-center border-t border-[#d3c5c3] bg-[#f6f3f2] text-[12.300px]">
    <span class="-ml-[12px] w-[160px] whitespace-nowrap text-[12.600px] tracking-[.1px]">幻灯片 第 5 张，共 28 张</span>
    <svg class="h-[13px] w-4" viewBox="0 0 16 13" fill="none" stroke="#a58369" stroke-width="1.200"><path d="M8 2L5 .5H.5V11H6L8 12.500V2L11 .5M10 4L15 11M15 4L10 11M9 12H12"/></svg>
    <span class="ml-[17px]">中文(中国)</span>
    <div class="ml-auto flex h-[22px] items-center">
      <svg class="h-3 w-3" viewBox="0 0 12 12"><path d="M3 4L6 1L9 4Z" fill="#a58369"/><path d="M1 6H11M0 8.500H12M1 11H11" stroke="#b69c88"/></svg><span class="ml-[5px]">备注</span>
      <svg class="ml-5 h-[14px] w-[14px]" viewBox="0 0 14 14"><path d="M0 0H14V9H6L3 13V9H0Z" fill="#935a47"/></svg><span class="ml-1">批注</span>
      <div class="ml-[19px] flex h-[22px] w-10 items-center justify-center bg-[#d3c5c3]"><svg class="h-[14px] w-[15px]" viewBox="0 0 15 14" fill="none" stroke="#a58369"><path d="M.5 .5H14.500V13.500H.5ZM3.500 .5V13.500M6 3H12V8H6ZM3.500 11H14"/></svg></div>
      <svg class="ml-[14px] h-[14px] w-[14px]" viewBox="0 0 14 14" fill="none" stroke="#ad8e74"><path d="M.5 .5H5V5H.5ZM9 .5H13.500V5H9ZM.5 9H5V13.500H.5ZM9 9H13.500V13.500H9Z"/></svg>
      <svg class="ml-[26px] h-[14px] w-[15px]" viewBox="0 0 15 14" fill="none" stroke="#ad8e74"><path d="M7.500 2L6 .5H.5V11.500H6L7.500 13V2L9 .5H14.500V11.500H9L7.500 13M2 3.500H5M2 6H5M2 8.500H5M10 3.500H13M10 6H13M10 8.500H13"/></svg>
      <svg class="ml-[26px] h-[14px] w-[14px]" viewBox="0 0 14 14" fill="none" stroke="#ad8e74"><path d="M0 1.500H14M1.500 2V7.500H12.500V2M7 8V12M4 13H10M0 .5H14"/></svg>
      <svg class="ml-5 h-3 w-32" viewBox="0 0 128 12"><path d="M0 6H8M120 6H128M124 2V10" stroke="#8e5040"/><path d="M14 6.500H115" stroke="#82382d"/><path d="M64.500 0H70V12H64.500Z" fill="#8e5040"/></svg>
      <span class="ml-[12px] w-[47px] tracking-[.3px]">114%</span><span class="h-4 w-px bg-[#cdbbb4]"></span>
    </div>
  </footer>

  <!-- taskbar -->
  <div class="flex h-5 shrink-0 items-start overflow-hidden bg-[#82382d] text-[#e3d6cf]">
    <svg class="h-5 w-[380px] shrink-0" viewBox="0 0 380 20" fill="none" stroke="#fafafa" stroke-width="1.800"><path d="M0 14L6 13V20H0ZM7 13L15 12V20H7Z" fill="#fafafa" stroke="none"/><circle cx="58" cy="18" r="5.500"/><circle cx="104" cy="20" r="7"/><path d="M145 12V15H156V12M146 20V18H156V20M160 12V20" stroke-width="1.500"/><path d="M195 20Q197 10 205 12L216 14V20Z" fill="#ad8e74" stroke="none"/><circle cx="205" cy="20" r="5" stroke="#d3c5c3"/><path d="M244 12H254L256 14H265V20H244Z" fill="#ad8e74" stroke="none"/><path d="M300 14Q307 9 313 12Q317 15 316 20H306Q306 16 300 14Z" fill="#ad8e74" stroke="none"/><path d="M297 20V16L302 15" stroke="#e3d6cf"/><path d="M343 9H366V20H343Z" fill="#ad8e74" stroke="none"/><path d="M346 11H362V20H346Z" fill="#82382d" stroke="none"/><text x="348" y="20" font-size="9" font-weight="700" fill="#fafafa" stroke="none">PC</text></svg>
    <div class="h-5 w-[49px] shrink-0 bg-[#905444]"><svg class="h-5 w-[49px]" viewBox="0 0 49 20"><path d="M12 10Q12 8 15 8H36V20H12Z" fill="#c9b4a6"/><path d="M17 20Q17 12 25 12Q30 12 31 16L36 20Z" fill="#fafafa"/></svg></div>
    <svg class="ml-auto h-5 w-[25px] shrink-0" viewBox="0 0 25 20"><path d="M3 20Q2 16 8 15Q12 11 17 14Q23 16 24 20Z" fill="#fafafa"/></svg>
    <span class="ml-[8px] mt-[13px] w-[41px] shrink-0 text-[13px]">21°C</span><span class="mt-[13px] w-[46px] shrink-0 text-[13px]">多云</span>
    <svg class="h-5 w-[124px] shrink-0" viewBox="1628 0 124 20" fill="none" stroke="#f4ebe6" stroke-width="1.600"><path d="M1629 20L1633 16L1637 20M1675 20V14.500H1690V20M1679 18V20M1699 20V18L1704 15V20M1707 17L1709 20M1711 15L1714 20M1734 20L1740 13L1742 14L1738 20"/><path d="M1654 12H1662V20H1654Z" fill="#fafafa" stroke="none"/></svg>
    <span class="ml-[5px] mt-[13px] w-[28px] shrink-0 text-[12px]">中</span>
    <svg class="h-5 w-[33px] shrink-0" viewBox="0 0 33 20"><path d="M0 20Q3 14 8 15L14 14L12 20Z" fill="#d9c6ba"/></svg>
    <span class="mt-[5px] w-[80px] shrink-0 text-[12.300px] tracking-[.1px]">10:33 周六</span>
    <svg class="h-5 w-[22px] shrink-0" viewBox="0 0 22 20"><path d="M0 12H16V20H0Z" fill="#fafafa"/><path d="M3 15H13M3 18H13" stroke="#82382d"/></svg>
  </div>
</div>

<!-- watermark -->
<div class="absolute left-[1431px] top-[134px]">
  <svg class="h-[44px] w-[370px]" viewBox="0 0 370 44" fill="#ad8e74"><text x="-1" y="34" font-family="Noto Sans CJK SC, sans-serif" font-weight="300" font-size="38.500" textLength="160">海量一手</text><text x="159" y="32" font-family="Liberation Serif, serif" font-size="36" textLength="204" lengthAdjust="spacingAndGlyphs">:666java.com</text></svg>
</div>

<!-- live class chat window -->
<section class="absolute left-[1763px] top-[238px] flex h-[734px] w-[157px] flex-col border-b border-l border-t border-[#cdbbb4] bg-[#fafafa] text-[#ad8e74]">
  <div class="h-[30px] bg-[#874335]"></div>
  <div class="mt-[540px] flex h-5 items-center overflow-hidden whitespace-nowrap pl-[10px]">
    <svg class="h-[19px] w-[19px] shrink-0" viewBox="0 0 19 19" fill="none" stroke="#99705a" stroke-width="1.300"><circle cx="9.500" cy="9.500" r="8.700"/><path d="M4.500 11Q9.500 17 14.500 11"/><circle cx="6.500" cy="6.500" r=".8"/><circle cx="12.500" cy="6.500" r=".8"/></svg>
    <svg class="ml-[15px] h-4 w-[17px] shrink-0" viewBox="0 0 17 16" fill="none" stroke="#99705a" stroke-width="1.200"><path d="M3 12C-3 6 3 .7 8.500 .7S17 4 16 8S10 14 6 13L2 15Z"/><path d="M4.500 7.500H6M8 7.500H9.500M11.500 7.500H13"/></svg>
    <svg class="ml-[18px] h-4 w-[17px] shrink-0" viewBox="0 0 17 16" fill="none" stroke="#99705a" stroke-width="1.300"><path d="M.7 .7H16.300V15.300H.7ZM1 14L5 10L8 13L16 5"/><circle cx="5" cy="5" r="1.500"/></svg>
    <span class="ml-[24px] text-[11.500px]">对</span><span class="ml-[15px] text-[12.300px] text-[#8e5040]">所有人</span>
  </div>
  <div class="mt-[12px] pl-[14px] text-[12.300px] text-[#c3ab9b]">我要发言...</div>
  <div class="mt-auto flex items-center whitespace-nowrap pb-[11px] pl-[27px] text-[11.800px]">
    <span class="w-[32px]"><b>2</b>人</span><span class="w-[60px] text-[11.800px] font-bold">00:33:04</span><span>掉帧</span>
  </div>
</section>
</body>
</html>
